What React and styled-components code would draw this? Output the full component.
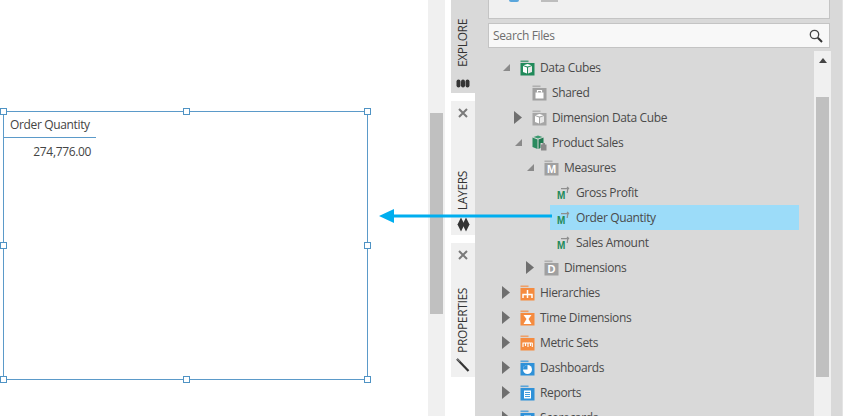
import React from "react";
import styled, { createGlobalStyle } from "styled-components";

const Global = createGlobalStyle`
  html, body { margin: 0; padding: 0; background: #fff; }
  body { font-family: "Open Sans", "Noto Sans", sans-serif; letter-spacing: -0.35px; }
`;

const Page = styled.div`
  position: relative;
  display: flex;
  width: 843px;
  height: 416px;
  overflow: hidden;
  background: #fff;
`;

const Canvas = styled.div`
  position: relative;
  flex: 0 0 428px;
  height: 100%;
`;

const Widget = styled.div`
  position: absolute;
  left: 3px;
  top: 111px;
  width: 365px;
  height: 269px;
  box-sizing: border-box;
  border: 1px solid #5b9ac9;
`;

const WidgetTable = styled.div`
  width: 92px;
  font-size: 12px;
  color: #444;
`;

const WidgetHeader = styled.div`
  height: 25px;
  line-height: 25px;
  padding-left: 6px;
  border-bottom: 1px solid #5b9ac9;
`;

const WidgetValue = styled.div`
  height: 27px;
  line-height: 27px;
  padding-right: 5px;
  text-align: right;
`;

const Handle = styled.span`
  position: absolute;
  width: 7px;
  height: 7px;
  box-sizing: border-box;
  background: #fff;
  border: 1px solid #4f93c4;
  left: ${(p) => p.$x - 3 - 4}px;
  top: ${(p) => p.$y - 111 - 4}px;
`;

const PageScroll = styled.div`
  flex: 0 0 17px;
  box-sizing: border-box;
  padding: 113px 2px 0;
  background: #f0f0f0;
`;

const PageThumb = styled.div`
  width: 13px;
  height: 201px;
  background: #c0c0c0;
`;

const TabRail = styled.div`
  flex: 0 0 24px;
  margin-left: 6px;
  display: flex;
  flex-direction: column;
  gap: 8px;
`;

const Tab = styled.div`
  height: ${(p) => p.$h}px;
  box-sizing: border-box;
  display: flex;
  flex-direction: column;
  align-items: center;
  padding-bottom: ${(p) => p.$pb}px;
  background: ${(p) => (p.$active ? "#d9d9d9" : "#f0f0f0")};
`;

const TabClose = styled.div`
  height: 24px;
  display: flex;
  align-items: center;
  justify-content: center;
  color: #7a7a7a;
`;

const TabLabel = styled.div`
  margin-top: auto;
  writing-mode: vertical-rl;
  transform: rotate(180deg);
  font-size: 12px;
  line-height: 16px;
  color: #333;
`;

const TabGlyph = styled.svg`
  display: block;
  margin-top: ${(p) => p.$mt}px;
  flex: none;
`;

const Panel = styled.div`
  flex: 1;
  min-width: 0;
  box-sizing: border-box;
  padding-left: 13px;
  padding-right: 12px;
  background: #d9d9d9;
  display: flex;
  flex-direction: column;
  overflow: hidden;
  border-right: 1px solid #e4e4e4;
`;

const TopBox = styled.div`
  flex: none;
  height: 19px;
  box-sizing: border-box;
  display: flex;
  align-items: flex-start;
  padding-left: 20px;
  gap: 22px;
  background: #f0f0f0;
  border: 1px solid #c4c4c4;
  border-top: 0;
`;

const TopStub = styled.span`
  width: ${(p) => p.$w}px;
  height: 2px;
  background: ${(p) => p.$c};
  border-radius: ${(p) => (p.$round ? "0 0 5px 5px" : "0")};
`;

const Search = styled.div`
  flex: none;
  margin-top: 4px;
  height: 25px;
  box-sizing: border-box;
  display: flex;
  align-items: center;
  justify-content: space-between;
  padding: 0 6px 0 4px;
  background: #f8f8f8;
  border: 1px solid #c4c4c4;
  font-size: 12px;
  color: #6e6e6e;
`;

const TreeArea = styled.div`
  flex: 1;
  min-height: 0;
  margin-top: 3px;
  display: flex;
`;

const Tree = styled.div`
  flex: none;
  width: 311px;
  box-sizing: border-box;
  padding: 4px 0 0 14px;
`;

const Row = styled.div`
  display: flex;
  height: 25px;
  padding-left: ${(p) => p.$depth * 12}px;
`;

const Caret = styled.div`
  flex: 0 0 12px;
  display: flex;
  align-items: center;
`;

const RowContent = styled.div`
  flex: 1;
  display: flex;
  align-items: center;
  gap: 5px;
  padding-left: 6px;
  font-size: 12px;
  color: #4a4a4a;
  white-space: nowrap;
  background: ${(p) => (p.$selected ? "#9cdcf9" : "transparent")};
`;

const TreeScroll = styled.div`
  flex: none;
  width: 17px;
  margin-left: 15px;
  box-sizing: border-box;
  background: #f0f0f0;
  display: flex;
  flex-direction: column;
  align-items: center;
`;

const ScrollUp = styled.div`
  height: 46px;
  padding-top: 7px;
  box-sizing: border-box;
`;

const TreeThumb = styled.div`
  width: 13px;
  height: 280px;
  background: #c0c0c0;
`;

const ArrowOverlay = styled.svg`
  position: absolute;
  left: 378px;
  top: 205px;
`;

const Folder = ({ color, children }) => (
  <svg width="15" height="16" viewBox="0 0 15 16" style={{ flex: "none" }}>
    <rect x="0.5" y="0.5" width="8" height="1.6" fill={color} opacity="0.75" />
    <rect x="0.5" y="3" width="14" height="12.5" fill={color} />
    {children}
  </svg>
);

const CubeGlyph = () => (
  <g>
    <path d="M3 6 L7 7.5 V13.5 L3 12 Z" fill="#fff" />
    <path d="M12 6 L8 7.5 V13.5 L12 12 Z" fill="#e8e8e8" />
    <path d="M3.5 5.2 L7.5 4 L11.5 5.2 L7.5 6.6 Z" fill="#fff" />
  </g>
);

const LetterGlyph = ({ c }) => (
  <text x="7.5" y="13.4" textAnchor="middle" fontFamily="Liberation Sans" fontWeight="700" fontSize="11" letterSpacing="0" fill="#fff">
    {c}
  </text>
);

const icons = {
  cubes: () => <Folder color="#218a5a"><CubeGlyph /></Folder>,
  shared: () => (
    <Folder color="#a0a0a0">
      <rect x="3.5" y="7.5" width="8" height="6" fill="#fff" />
      <path d="M5.5 7.5 V5.5 H9.5 V7.5" fill="none" stroke="#fff" strokeWidth="1.2" />
    </Folder>
  ),
  cubeGrey: () => <Folder color="#a6a6a6"><CubeGlyph /></Folder>,
  product: () => (
    <svg width="15" height="16" viewBox="0 0 15 16" style={{ flex: "none" }}>
      <path d="M0.5 2.5 L5.5 4.5 V14 L0.5 12 Z" fill="#2a8a5e" />
      <path d="M6.5 4.5 L11.5 2.5 V8 H8.5 V13 L6.5 14 Z" fill="#1f7a50" />
      <path d="M1.5 2 L6 0.5 L10.5 2 L6 3.6 Z" fill="#3c9a70" />
      <rect x="9" y="9.5" width="5.5" height="6" fill="#8a8a8a" />
      <rect x="10.5" y="8" width="2.5" height="2" fill="#8a8a8a" />
    </svg>
  ),
  measures: () => <Folder color="#a0a0a0"><LetterGlyph c="M" /></Folder>,
  dims: () => <Folder color="#a0a0a0"><LetterGlyph c="D" /></Folder>,
  measure: () => (
    <svg width="15" height="15" viewBox="0 0 15 15" style={{ flex: "none" }}>
      <text x="1" y="13.5" fontFamily="Liberation Sans" fontWeight="700" fontSize="10" letterSpacing="0" fill="#218a5a">M</text>
      <path d="M5 3.7 H13 M13 3.7 L11 2 M11.8 3.7 L11.2 8" fill="none" stroke="#8f8f8f" strokeWidth="1.3" />
    </svg>
  ),
  hier: () => (
    <Folder color="#f58b3f">
      <path d="M7.5 5 V9 M3 13 V9.5 H12 V13 M7.5 9.5 V13" stroke="#fff" strokeWidth="1.5" fill="none" />
    </Folder>
  ),
  time: () => (
    <Folder color="#f58b3f">
      <path d="M3.5 5 H11.5 L8.5 9 L11.5 14 H3.5 L6.5 9 Z" fill="#fff" />
    </Folder>
  ),
  metric: () => (
    <Folder color="#f58b3f">
      <path d="M2.5 8 H12.5 M3 8 V12 M5.5 8 V11 M8 8 V12 M10.5 8 V11 M12.3 8 V12" stroke="#fff" strokeWidth="1.1" fill="none" />
    </Folder>
  ),
  dash: () => (
    <Folder color="#2f91d8">
      <circle cx="7.5" cy="9.5" r="4.5" fill="#fff" />
      <path d="M7.5 9.5 V5 A4.5 4.5 0 0 0 3 9.5 Z" fill="#2f91d8" />
    </Folder>
  ),
  report: () => (
    <Folder color="#2f91d8">
      <rect x="4" y="5.5" width="7" height="8" fill="#fff" />
      <path d="M5 7.5 H10 M5 9.5 H10 M5 11.5 H10" stroke="#2f91d8" strokeWidth="0.9" />
    </Folder>
  ),
  score: () => (
    <Folder color="#2f91d8">
      <rect x="4" y="5.5" width="7" height="8" fill="#fff" />
    </Folder>
  ),
};

const CaretOpen = () => (
  <svg width="9" height="9" viewBox="0 0 9 9"><path d="M8 1 V8 H1 Z" fill="#8a8a8a" /></svg>
);
const CaretClosed = () => (
  <svg width="8" height="13" viewBox="0 0 8 13"><path d="M0 0 L8 6.5 L0 13 Z" fill="#6f6f6f" /></svg>
);

const rows = [
  { d: 0, c: "open", i: "cubes", t: "Data Cubes" },
  { d: 1, i: "shared", t: "Shared" },
  { d: 1, c: "closed", i: "cubeGrey", t: "Dimension Data Cube" },
  { d: 1, c: "open", i: "product", t: "Product Sales" },
  { d: 2, c: "open", i: "measures", t: "Measures" },
  { d: 3, i: "measure", t: "Gross Profit" },
  { d: 3, i: "measure", t: "Order Quantity", s: true },
  { d: 3, i: "measure", t: "Sales Amount" },
  { d: 2, c: "closed", i: "dims", t: "Dimensions" },
  { d: 0, c: "closed", i: "hier", t: "Hierarchies" },
  { d: 0, c: "closed", i: "time", t: "Time Dimensions" },
  { d: 0, c: "closed", i: "metric", t: "Metric Sets" },
  { d: 0, c: "closed", i: "dash", t: "Dashboards" },
  { d: 0, c: "closed", i: "report", t: "Reports" },
  { d: 0, c: "closed", i: "score", t: "Scorecards" },
];

const handles = [
  [3, 111], [186, 111], [367, 111],
  [3, 245], [367, 245],
  [3, 379], [186, 379], [367, 379],
];

const CloseX = () => (
  <svg width="10" height="10" viewBox="0 0 10 10">
    <path d="M1 1 L9 9 M9 1 L1 9" stroke="#7a7a7a" strokeWidth="2" />
  </svg>
);

export default function App() {
  return (
    <Page>
      <Global />
      <Canvas>
        <Widget>
          <WidgetTable>
            <WidgetHeader>Order Quantity</WidgetHeader>
            <WidgetValue>274,776.00</WidgetValue>
          </WidgetTable>
          {handles.map(([x, y]) => (
            <Handle key={`${x}-${y}`} $x={x} $y={y} />
          ))}
        </Widget>
      </Canvas>
      <PageScroll>
        <PageThumb />
      </PageScroll>
      <TabRail>
        <Tab $active $h={93} $pb={5}>
          <TabLabel>EXPLORE</TabLabel>
          <TabGlyph $mt={12} width="14" height="9" viewBox="0 0 14 9">
            <rect x="0.5" y="0.5" width="4" height="8" rx="2" fill="#333" />
            <rect x="5" y="0.5" width="4" height="8" rx="2" fill="#333" />
            <rect x="9.5" y="0.5" width="4" height="8" rx="2" fill="#333" />
          </TabGlyph>
        </Tab>
        <Tab $h={134} $pb={3}>
          <TabClose><CloseX /></TabClose>
          <TabLabel>LAYERS</TabLabel>
          <TabGlyph $mt={7} width="13" height="15" viewBox="0 0 13 15">
            <path d="M4 0.5 L7.5 7.5 L4 14.5 L0.5 7.5 Z" fill="#333" />
            <path d="M9 0.5 L12.5 7.5 L9 14.5 L5.5 7.5 Z" fill="#333" />
          </TabGlyph>
        </Tab>
        <Tab $h={134} $pb={4}>
          <TabClose><CloseX /></TabClose>
          <TabLabel>PROPERTIES</TabLabel>
          <TabGlyph $mt={5} width="14" height="15" viewBox="0 0 14 15">
            <path d="M1 1 L12.5 13" stroke="#333" strokeWidth="2.2" fill="none" />
            <path d="M1 1 L4 3.5" stroke="#777" strokeWidth="1.4" fill="none" />
          </TabGlyph>
        </Tab>
      </TabRail>
      <Panel>
        <TopBox>
          <TopStub $w={10} $c="#5aa6dc" $round />
          <TopStub $w={17} $c="#bdbdbd" />
        </TopBox>
        <Search>
          <span>Search Files</span>
          <svg width="14" height="14" viewBox="0 0 14 14">
            <circle cx="5.5" cy="5.5" r="4.2" fill="none" stroke="#444" strokeWidth="1.3" />
            <path d="M8.8 8.8 L13 13" stroke="#333" strokeWidth="2" />
          </svg>
        </Search>
        <TreeArea>
          <Tree>
            {rows.map((r) => {
              const Icon = icons[r.i];
              return (
                <Row key={r.t} $depth={r.d}>
                  <Caret>
                    {r.c === "open" && <CaretOpen />}
                    {r.c === "closed" && <CaretClosed />}
                  </Caret>
                  <RowContent $selected={r.s}>
                    <Icon />
                    <span>{r.t}</span>
                  </RowContent>
                </Row>
              );
            })}
          </Tree>
          <TreeScroll>
            <ScrollUp>
              <svg width="8" height="5" viewBox="0 0 8 5" style={{ display: "block" }}>
                <path d="M4 0 L8 5 H0 Z" fill="#444" />
              </svg>
            </ScrollUp>
            <TreeThumb />
          </TreeScroll>
        </TreeArea>
      </Panel>
      <ArrowOverlay width="176" height="22" viewBox="0 0 176 22">
        <path d="M14 11 H174" stroke="#00aeef" strokeWidth="3" />
        <path d="M1 11 L16 4 V18 Z" fill="#00aeef" />
      </ArrowOverlay>
    </Page>
  );
}
